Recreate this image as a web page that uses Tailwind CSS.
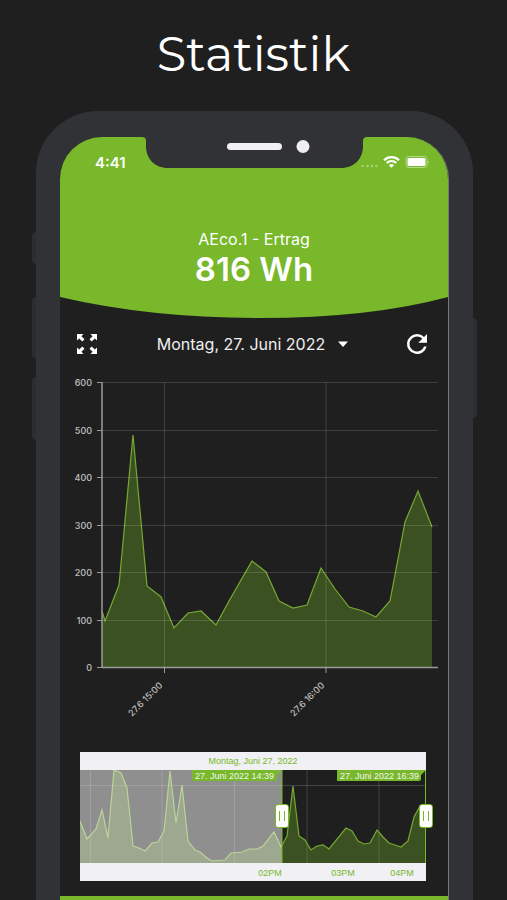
<!DOCTYPE html>
<html lang="de">
<head>
    <meta charset="UTF-8">
    <meta name="viewport" content="width=device-width, initial-scale=1.0">
    <title>Statistik</title>
    <script src="https://cdn.jsdelivr.net/npm/@tailwindcss/browser@4"></script>
</head>
<body class="bg-[#1f1f1f] text-white font-['Inter',sans-serif] h-screen flex flex-col overflow-hidden">

    <h1 class="h-[111px] shrink-0 pt-[22px] text-center text-[48px] leading-[64px] font-normal font-['Montserrat','Inter',sans-serif]">Statistik</h1>

    <!-- Phone -->
    <div class="relative grow ml-9 mr-[34px] px-6 pt-[26px] bg-[#313236] rounded-t-[62px] flex flex-col">
        <!-- Side buttons -->
        <span class="absolute -left-1 top-[121px] w-1 h-8 rounded-l bg-[#2c2d31]"></span>
        <span class="absolute -left-1 top-[186px] w-1 h-[61px] rounded-l bg-[#2c2d31]"></span>
        <span class="absolute -left-1 top-[266px] w-1 h-[63px] rounded-l bg-[#2c2d31]"></span>
        <span class="absolute -right-1 top-[207px] w-1 h-[100px] rounded-r bg-[#2c2d31]"></span>

        <!-- Screen -->
        <div class="relative grow bg-[#1f1f1f] rounded-t-[42px] border-r border-[#77777a] overflow-hidden flex flex-col">

            <!-- Notch -->
            <div class="absolute top-0 inset-x-0 flex justify-center">
                <svg class="w-[225px] h-8" viewBox="0 0 225 32">
                    <path fill="#313236" d="M0 0Q4 0 4 4V9C4 22 13 31 26 31H199C212 31 221 22 221 9V4Q221 0 225 0Z"/>
                    <rect x="85" y="6" width="55" height="7" rx="3.5" fill="#efeff4"/>
                    <circle cx="161" cy="9.500" r="6.500" fill="#efeff4"/>
                </svg>
            </div>

            <!-- Header -->
            <header class="bg-[#78b82a] h-40 shrink-0">
                <div class="flex justify-between pt-4 pl-[35px] pr-[19px]">
                    <span class="text-[15px] leading-5 font-semibold">4:41</span>
                    <svg class="w-[68px] h-5" viewBox="0 0 68 20" fill="#fff">
                        <g fill-opacity=".35">
                            <circle cx="1.500" cy="13" r="1.300"/>
                            <circle cx="6.500" cy="13" r="1.300"/>
                            <circle cx="11" cy="13" r="1.300"/>
                            <circle cx="15.500" cy="13" r="1.300"/>
                        </g>
                        <g fill="none" stroke="#fff" stroke-width="2.200">
                            <path d="M23 7.200A10.500 10.500 0 0 1 38 7.200"/>
                            <path d="M25.700 10A6.800 6.800 0 0 1 35.300 10"/>
                        </g>
                        <path d="M27.900 12.200A3.700 3.700 0 0 1 33.100 12.200L30.500 14.800Z"/>
                        <rect x="45" y="3.500" width="21" height="11" rx="3" fill="none" stroke="#fff" stroke-opacity=".45"/>
                        <rect x="46.500" y="5" width="18" height="8" rx="1.500"/>
                        <path fill-opacity=".5" d="M67 7.200Q68.500 9 67 10.800Z"/>
                    </svg>
                </div>
                <div class="text-center pt-14">
                    <p class="text-[16px] leading-5">AEco.1 - Ertrag</p>
                    <p class="text-[33px] leading-10 font-semibold">816 Wh</p>
                </div>
            </header>
            <svg class="w-full h-[22px] shrink-0" viewBox="0 0 388 22" preserveAspectRatio="none">
                <path fill="#78b82a" d="M0 0Q90 21 200 21T388 0Z"/>
            </svg>

            <!-- Toolbar -->
            <div class="flex items-center justify-between h-[50px] shrink-0 px-4">
                <button class="w-7" aria-label="Vollbild">
                    <svg class="w-[22px] h-[22px]" viewBox="0 0 22 22">
                        <g fill="#fff">
                            <path d="M1 1H7.500L5.400 3.200L8.500 6.300L6.300 8.500L3.200 5.400L1 7.500Z"/>
                            <path d="M21 1V7.500L18.800 5.400L15.700 8.500L13.500 6.300L16.600 3.200L14.500 1Z"/>
                            <path d="M1 21V14.500L3.200 16.600L6.300 13.500L8.500 15.700L5.400 18.800L7.500 21Z"/>
                            <path d="M21 21H14.500L16.600 18.800L13.500 15.700L15.700 13.500L18.800 16.600L21 14.500Z"/>
                        </g>
                    </svg>
                </button>
                <button class="flex items-center gap-3 text-[16px] leading-5 text-[#efefef]">
                    Montag, 27. Juni 2022
                    <svg class="w-3 h-3" viewBox="0 0 12 12"><path fill="#fff" d="M1 3.500H11L6 9Z"/></svg>
                </button>
                <button aria-label="Aktualisieren">
                    <svg class="w-[30px] h-[30px]" viewBox="0 0 24 24"><path fill="#fff" d="M17.650 6.350A7.960 7.960 0 0 0 12 4a8 8 0 1 0 7.730 10h-2.080A6 6 0 1 1 12 6c1.660 0 3.140.69 4.220 1.780L13 11h7V4z"/></svg>
                </button>
            </div>

            <!-- Chart -->
            <svg class="w-full shrink-0" viewBox="0 0 388 372">
                <path fill="#78b82a" fill-opacity=".33" d="M42 298V242L45 252L59 216L73 66L87 217L101 228L114 259L128 244L141 242L156 256L169 232L192 192L206 203L219 232L233 239L247 236L261 199L275 220L289 238L303 242L316 248L330 232L345 153L358 122L372 158V298Z"/>
                <path fill="none" stroke="#76a832" stroke-width="1.200" d="M42 242L45 252L59 216L73 66L87 217L101 228L114 259L128 244L141 242L156 256L169 232L192 192L206 203L219 232L233 239L247 236L261 199L275 220L289 238L303 242L316 248L330 232L345 153L358 122L372 158"/>
                <g stroke="#fff" stroke-opacity=".14">
                    <path d="M42 13.500H378M42 61.500H378M42 108.500H378M42 156.500H378M42 203.500H378M42 251.500H378M104.500 13V298M266 13V298"/>
                </g>
                <g stroke="#9b9b9b" fill="none">
                    <path stroke-width="1.500" d="M42 13V299M42 298.500H378"/>
                    <path d="M37 13.500H42M37 61.500H42M37 108.500H42M37 156.500H42M37 203.500H42M37 251.500H42M37 298.500H42M104.500 299V304M266 299V304"/>
                </g>
                <g fill="#c0c0c0" font-size="9" font-weight="500" text-anchor="end">
                    <text x="32" y="17">600</text>
                    <text x="32" y="65">500</text>
                    <text x="32" y="112">400</text>
                    <text x="32" y="160">300</text>
                    <text x="32" y="207">200</text>
                    <text x="32" y="255">100</text>
                    <text x="32" y="302">0</text>
                    <text transform="translate(103 317) rotate(-45)">27.6 15:00</text>
                    <text transform="translate(265 317) rotate(-45)">27.6 16:00</text>
                </g>
            </svg>

            <!-- Range selector -->
            <div class="mt-[11px] ml-5 mr-[22px] bg-[#f0f0f5] text-[#78b82a] font-['Liberation_Sans',sans-serif]">
                <p class="text-center text-[9px] leading-[18px]">Montag, Juni 27, 2022</p>
                <div class="relative">
                    <svg class="w-full block" viewBox="0 0 346 111">
                        <rect width="346" height="93" fill="#1f1f1f"/>
                        <path fill="none" stroke="#fff" stroke-opacity=".16" d="M0 15.500H346M10.500 0V93M82 0V93M154.500 0V93M227 0V93M299 0V93"/>
                        <path fill="#78b82a" fill-opacity=".33" d="M0 93V51L7 69L16 59L22 40L28 68L34 0L41 3L47 18L53 76L59 78L65 81L72 73L78 72L84 61L90 1L96 53L102 15L108 71L115 80L120 82L127 88L132 91L145 90L151 83L162 82L169 79L177 79L183 76L194 62L201 77L207 66L213 16L219 66L225 70L231 80L237 76L243 75L249 79L266 58L272 61L278 71L284 74L290 73L297 60L303 67L309 73L315 75L321 77L328 71L334 47L340 36L346 46V93Z"/>
                        <path fill="none" stroke="#76a832" stroke-width="1.200" d="M0 51L7 69L16 59L22 40L28 68L34 0L41 3L47 18L53 76L59 78L65 81L72 73L78 72L84 61L90 1L96 53L102 15L108 71L115 80L120 82L127 88L132 91L145 90L151 83L162 82L169 79L177 79L183 76L194 62L201 77L207 66L213 16L219 66L225 70L231 80L237 76L243 75L249 79L266 58L272 61L278 71L284 74L290 73L297 60L303 67L309 73L315 75L321 77L328 71L334 47L340 36L346 46"/>
                        <rect width="202" height="93" fill="#fff" fill-opacity=".5"/>
                        <path stroke="#78b82a" d="M202 0V93M345.500 0V93"/>
                        <path fill="#78b82a" d="M112 0H202L197 5V9Q197 11 195 11H112ZM257 0H346L341 5V9Q341 11 339 11H257Z"/>
                        <g fill="#f4f4f4" font-size="9" text-anchor="end">
                            <text x="194" y="9">27. Juni 2022 14:39</text>
                            <text x="339" y="9">27. Juni 2022 16:39</text>
                        </g>
                        <g fill="#78b82a" font-size="9" text-anchor="middle">
                            <text x="190" y="106">02PM</text>
                            <text x="263" y="106">03PM</text>
                            <text x="322" y="106">04PM</text>
                        </g>
                    </svg>
                    <input type="range" min="0" max="346" value="202" aria-label="Von"
                        class="absolute top-[34px] -left-[7px] w-[calc(100%+14px)] h-6 appearance-none bg-transparent pointer-events-none [&::-webkit-slider-thumb]:appearance-none [&::-webkit-slider-thumb]:pointer-events-auto [&::-webkit-slider-thumb]:w-[14px] [&::-webkit-slider-thumb]:h-6 [&::-webkit-slider-thumb]:rounded-[3px] [&::-webkit-slider-thumb]:border [&::-webkit-slider-thumb]:border-[#78b82a] [&::-webkit-slider-thumb]:bg-[linear-gradient(90deg,#fff_3px,#78b82a_3px,#78b82a_4px,#fff_4px,#fff_8px,#78b82a_8px,#78b82a_9px,#fff_9px)] [&::-webkit-slider-thumb]:shadow-[inset_0_6px_#fff,inset_0_-6px_#fff]">
                    <input type="range" min="0" max="346" value="346" aria-label="Bis"
                        class="absolute top-[34px] -left-[7px] w-[calc(100%+14px)] h-6 appearance-none bg-transparent pointer-events-none [&::-webkit-slider-thumb]:appearance-none [&::-webkit-slider-thumb]:pointer-events-auto [&::-webkit-slider-thumb]:w-[14px] [&::-webkit-slider-thumb]:h-6 [&::-webkit-slider-thumb]:rounded-[3px] [&::-webkit-slider-thumb]:border [&::-webkit-slider-thumb]:border-[#78b82a] [&::-webkit-slider-thumb]:bg-[linear-gradient(90deg,#fff_3px,#78b82a_3px,#78b82a_4px,#fff_4px,#fff_8px,#78b82a_8px,#78b82a_9px,#fff_9px)] [&::-webkit-slider-thumb]:shadow-[inset_0_6px_#fff,inset_0_-6px_#fff]">
                </div>
            </div>

            <!-- Tab bar -->
            <nav class="mt-[15px] grow bg-[#78b82a]"></nav>
        </div>
    </div>

</body>
</html>
